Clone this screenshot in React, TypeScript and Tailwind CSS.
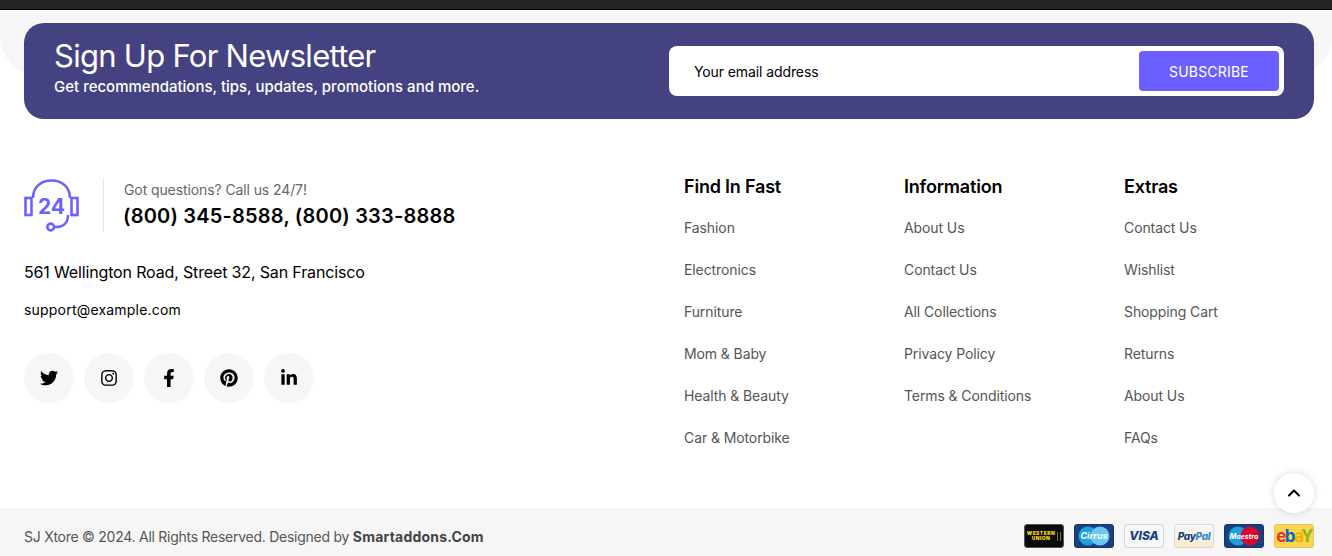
import React from 'react';
import { ChevronUp } from 'lucide-react';
import { FaTwitter, FaInstagram, FaFacebookF, FaPinterest, FaLinkedinIn } from 'react-icons/fa';

const columns = [
  { title: 'Find In Fast', links: ['Fashion', 'Electronics', 'Furniture', 'Mom & Baby', 'Health & Beauty', 'Car & Motorbike'] },
  { title: 'Information', links: ['About Us', 'Contact Us', 'All Collections', 'Privacy Policy', 'Terms & Conditions'] },
  { title: 'Extras', links: ['Contact Us', 'Wishlist', 'Shopping Cart', 'Returns', 'About Us', 'FAQs'] },
];

function SupportIcon() {
  return (
    <svg width="56" height="56" viewBox="0 0 56 56" fill="none" stroke="#6c63ff" strokeWidth="2.6" className="shrink-0">
      <rect x="1.5" y="21" width="6" height="17" />
      <rect x="47.5" y="21" width="6" height="17" />
      <path d="M9 21C9 10 17 3.5 27.5 3.5S46 10 46 21" />
      <path d="M44 38c0 8-5 12-12 12h-2" />
      <circle cx="26.7" cy="50" r="3.4" />
      <text x="27.5" y="37" textAnchor="middle" fontSize="21" fontWeight="700" fill="#6c63ff" stroke="none" fontFamily="Inter, sans-serif">24</text>
    </svg>
  );
}

function Card({ className, children }: { className: string; children: React.ReactNode }) {
  return <div className={`w-10 h-6 rounded-[3px] border overflow-hidden flex items-center justify-center ${className}`}>{children}</div>;
}

function Payments() {
  return (
    <div className="flex gap-[10px] items-center">
      <Card className="bg-[#0b0b0b] border-[#555] gap-[2px]">
        <span className="text-[#f2d21f] text-[5px] leading-[5px] font-black text-center tracking-[0.4px]">WESTERN<br />UNION</span>
        <span className="w-[4px] h-[9px] border-x border-[#8a7a20]" />
      </Card>
      <Card className="bg-[#1a3f80] border-[#173566]">
        <svg width="36" height="20" viewBox="0 0 36 20">
          <circle cx="12" cy="10" r="9.5" fill="#1f9fd8" />
          <circle cx="24" cy="10" r="9.5" fill="#6cc8f2" />
          <text x="18" y="13" textAnchor="middle" fontSize="9" fontWeight="700" fontStyle="italic" fill="#fff" fontFamily="Inter, sans-serif">Cirrus</text>
        </svg>
      </Card>
      <Card className="bg-[#f7f7f7] border-[#d5d5d5]">
        <span className="text-[#1a3f80] text-[12px] font-extrabold italic">VISA</span>
      </Card>
      <Card className="bg-gradient-to-b from-[#f8f8f8] to-[#fbeacb] border-[#d8d8d8]">
        <span className="text-[10px] font-extrabold italic text-[#1a3f80] tracking-[-0.3px]">Pay<span className="text-[#2a8cd0]">Pal</span></span>
      </Card>
      <Card className="bg-[#1a3f80] border-[#173566]">
        <svg width="36" height="20" viewBox="0 0 36 20">
          <circle cx="12" cy="10" r="9.5" fill="#1f9fd8" />
          <circle cx="24" cy="10" r="9.5" fill="#d9072f" />
          <text x="18" y="12.5" textAnchor="middle" fontSize="7" fontWeight="700" fontStyle="italic" fill="#fff" fontFamily="Inter, sans-serif">Maestro</text>
        </svg>
      </Card>
      <Card className="bg-[#fdd54a] border-[#e2c76a]">
        <span className="text-[17px] font-bold tracking-[-1.5px] leading-none">
          <span className="text-[#e53238]">e</span><span className="text-[#0064d2]">b</span><span className="text-[#f5af02]">a</span><span className="text-[#86b817]">Y</span>
        </span>
      </Card>
    </div>
  );
}

export default function App() {
  const socials = [FaTwitter, FaInstagram, FaFacebookF, FaPinterest, FaLinkedinIn];
  return (
    <div className="relative w-full h-[556px] overflow-hidden bg-white font-['Inter',sans-serif] text-black">
      <div className="h-[10px] bg-[#232323] border-b border-black" />
      <div className="h-[66px] bg-[#f6f6f6] rounded-b-[40px]" />

      <div className="relative ml-6 mr-[18px] -mt-[53px] h-[96px] rounded-[20px] bg-[#454282] px-[30px] flex items-center justify-between">
        <div className="text-white -mt-[6px]">
          <h2 className="text-[31px] leading-[34px] font-normal tracking-[-0.72px]">Sign Up For Newsletter</h2>
          <p className="mt-1 text-[15px] leading-[20px] font-medium tracking-[0px]">Get recommendations, tips, updates, promotions and more.</p>
        </div>
        <div className="w-[615px] h-[50px] rounded-[8px] bg-white pl-[25px] pr-[5px] py-[5px] flex items-center justify-between">
          <span className="text-[14px] tracking-[-0.1px]">Your email address</span>
          <button className="w-[140px] h-10 rounded-[4px] bg-[#6c5fff] text-white text-[14px] tracking-[0.2px]">SUBSCRIBE</button>
        </div>
      </div>

      <div className="flex pl-6 pt-[58px]">
        <div className="w-[660px] shrink-0">
          <div className="flex items-center h-[56px]">
            <SupportIcon />
            <div className="w-px h-[54px] bg-[#e5e5e5] ml-[23px] mr-5" />
            <div>
              <p className="text-[14px] leading-5 text-[#666] tracking-[-0.1px]">Got questions? Call us 24/7!</p>
              <p className="text-[20px] leading-[30px] font-semibold tracking-[0.2px] pt-px -ml-px">(800) 345-8588, (800) 333-8888</p>
            </div>
          </div>
          <p className="mt-[27px] text-[16px] leading-6 tracking-[-0.15px]">561 Wellington Road, Street 32, San Francisco</p>
          <p className="mt-[14px] text-[14px] leading-6 tracking-[0.2px]">support@example.com</p>
          <div className="flex gap-[10px] mt-[31px]">
            {socials.map((Icon, i) => (
              <div key={i} className="w-[50px] h-[50px] rounded-full bg-[#f6f6f6] flex items-center justify-center">
                <Icon className="text-[18px] text-black" />
              </div>
            ))}
          </div>
        </div>
        {columns.map((col) => (
          <div key={col.title} className="w-[220px] shrink-0">
            <h3 className="text-[18px] leading-6 font-semibold -mt-[2px] tracking-[-0.2px]">{col.title}</h3>
            <ul className="mt-[7px]">
              {col.links.map((link) => (
                <li key={link} className="h-[42px] flex items-center text-[14px] text-[#555] tracking-[-0.1px]">{link}</li>
              ))}
            </ul>
          </div>
        ))}
      </div>

      <div className="absolute right-[18px] bottom-[43px] z-10 w-10 h-10 rounded-full bg-white shadow-[0_0_8px_rgba(0,0,0,0.15)] flex items-center justify-center">
        <ChevronUp size={20} strokeWidth={2.5} />
      </div>

      <div className="absolute left-0 right-0 bottom-0 h-12 bg-[#f6f6f6] pl-6 pr-[18px] pt-2 flex items-center justify-between">
        <p className="text-[14px] text-[#555] tracking-[-0.26px]">SJ Xtore © 2024. All Rights Reserved. Designed by <strong className="font-bold text-[#444] tracking-[0.2px]">Smartaddons.Com</strong></p>
        <Payments />
      </div>
    </div>
  );
}
